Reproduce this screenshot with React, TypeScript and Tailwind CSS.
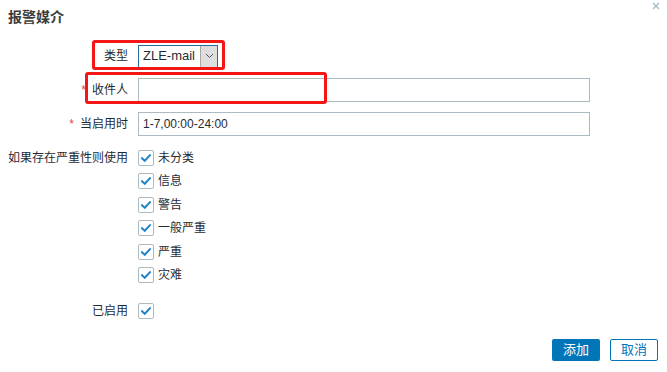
import React from 'react';

const font = { fontFamily: '"Liberation Sans", "Noto Sans CJK SC", Arial, sans-serif' };

function Check() {
  return (
    <span className="w-[16px] h-[16px] border border-[#acbbc2] rounded-[2px] bg-white flex items-center justify-center shrink-0">
      <svg width="10" height="8" viewBox="0 0 10 8" fill="none">
        <path d="M1 4.2 L3.8 6.8 L9 1.2" stroke="#1f85c8" strokeWidth="2" strokeLinecap="square" />
      </svg>
    </span>
  );
}

const severities = ['未分类', '信息', '警告', '一般严重', '严重', '灾难'];

export default function App() {
  return (
    <div className="relative w-[667px] h-[372px] bg-white text-[12px] text-[#1f2c33]" style={font}>
      <div className="h-[34px] px-[8px] flex items-center">
        <span className="text-[14px] font-bold text-[#3b3b3b]">报警媒介</span>
      </div>
      <button className="absolute top-[0px] right-[5px] w-[12px] h-[12px] flex items-center justify-center" aria-label="close">
        <svg width="8" height="8" viewBox="0 0 8 8">
          <path d="M1 1 L7 7 M7 1 L1 7" stroke="#a9c0cf" strokeWidth="1.6" />
        </svg>
      </button>

      <div className="pl-[6px] pr-[77px] flex flex-col">
        <div className="flex items-center h-[22px] mt-[11px]">
          <label className="w-[122px] text-right whitespace-nowrap">类型</label>
          <div className="ml-[10px] w-[80px] h-[23px] border border-[#2a6b98] flex items-stretch bg-white">
            <span className="flex-1 pl-[4px] flex items-center text-[13px] text-[#1f2c33]">ZLE-mail</span>
            <span className="w-[17px] bg-[#dedede] border-l border-[#a8a8a8] flex items-center justify-center">
              <svg width="9" height="6" viewBox="0 0 9 6" fill="none">
                <path d="M1 1 L4.5 4.5 L8 1" stroke="#555" strokeWidth="1" />
              </svg>
            </span>
          </div>
        </div>

        <div className="flex items-center h-[24px] mt-[11px]">
          <label className="w-[122px] text-right whitespace-nowrap">
            <span className="text-[#e04545] mr-[6px]">*</span>收件人
          </label>
          <input className="ml-[10px] flex-1 h-[24px] border border-[#acbbc2] outline-none" />
        </div>

        <div className="flex items-center h-[24px] mt-[10px]">
          <label className="w-[122px] text-right whitespace-nowrap">
            <span className="text-[#e04545] mr-[6px]">*</span>当启用时
          </label>
          <input
            className="ml-[10px] flex-1 h-[24px] border border-[#acbbc2] px-[4px] text-[12px] text-[#1f2c33] outline-none"
            defaultValue="1-7,00:00-24:00"
            style={font}
          />
        </div>

        <div className="flex mt-[10px]">
          <label className="w-[122px] text-right h-[23.5px] flex items-center justify-end whitespace-nowrap">如果存在严重性则使用</label>
          <div className="ml-[10px] flex flex-col">
            {severities.map((s) => (
              <div key={s} className="flex items-center h-[23.5px] gap-[4px]">
                <Check />
                <span>{s}</span>
              </div>
            ))}
          </div>
        </div>

        <div className="flex items-center h-[23.5px] mt-[12px]">
          <label className="w-[122px] text-right whitespace-nowrap">已启用</label>
          <div className="ml-[10px]">
            <Check />
          </div>
        </div>
      </div>

      <div className="absolute right-[9px] bottom-[11px] flex gap-[10px]">
        <button className="w-[48px] h-[22px] bg-[#0275b8] text-white rounded-[2px] text-[13px]">添加</button>
        <button className="w-[48px] h-[22px] bg-white border border-[#0275b8] text-[#0275b8] rounded-[2px] text-[13px]">取消</button>
      </div>

      <div className="absolute left-[92px] top-[40px] w-[133px] h-[30px] border-[3px] border-[#f41515] rounded-[3px] pointer-events-none" />
      <div className="absolute left-[85px] top-[72px] w-[242px] h-[32px] border-[3px] border-[#f41515] rounded-[3px] pointer-events-none" />
    </div>
  );
}
